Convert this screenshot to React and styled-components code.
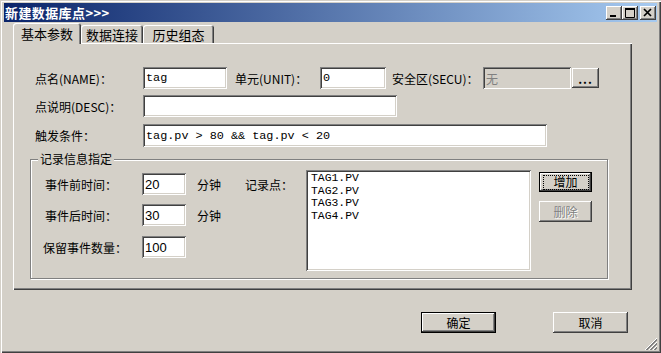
import React from 'react';
import styled, { createGlobalStyle } from 'styled-components';

const GlobalStyle = createGlobalStyle`
  html, body { margin: 0; padding: 0; background: #d4d0c8; }
  body {
    font-family: "Noto Sans CJK SC", "Liberation Sans", sans-serif;
    font-size: 12px;
    color: #000;
  }
  * { box-sizing: border-box; }
`;

const raised = `
  box-shadow: inset -1px -1px #404040, inset 1px 1px #fff,
    inset -2px -2px #808080, inset 2px 2px #d4d0c8;
`;

const sunken = `
  box-shadow: inset 1px 1px #808080, inset -1px -1px #fff,
    inset 2px 2px #404040, inset -2px -2px #d4d0c8;
`;

const Window = styled.div`
  position: relative;
  width: 661px;
  height: 353px;
  background: #d4d0c8;
  padding: 3px 4px;
  display: flex;
  flex-direction: column;
  box-shadow: inset 1px 1px #d4d0c8, inset 2px 2px #fff,
    inset -1px -1px #404040, inset -2px -2px #808080;
`;

const TitleBar = styled.div`
  height: 19px;
  display: flex;
  align-items: center;
  padding-left: 1px;
  background: linear-gradient(to right, #0a246a, #a6caf0);
  color: #fff;
  font-weight: bold;
  font-size: 13px;
  letter-spacing: 0.4px;
`;

const CaptionButtons = styled.div`
  margin-left: auto;
  margin-right: 1px;
  display: flex;
`;

const CapButton = styled.div`
  width: 16px;
  height: 14px;
  margin-left: ${p => p.$gap || 0}px;
  background: #d4d0c8;
  display: flex;
  ${raised}
`;

const Body = styled.div`
  padding: 1px 25px 0 9px;
  display: flex;
  flex-direction: column;
`;

const TabStrip = styled.div`
  display: flex;
  align-items: flex-end;
  height: 20px;
`;

const Tab = styled.div`
  position: relative;
  z-index: ${p => (p.$active ? 1 : 0)};
  width: ${p => p.$w}px;
  height: ${p => (p.$active ? 21 : 18)}px;
  margin-bottom: ${p => (p.$active ? -1 : 0)}px;
  background: #d4d0c8;
  border-radius: 3px 3px 0 0;
  display: flex;
  align-items: center;
  justify-content: center;
  font-size: 13px;
  padding-top: ${p => (p.$active ? 0 : 1)}px;
  box-shadow: inset 1px 1px #fff, inset -1px 0 #404040, inset -2px 0 #808080;
`;

const Panel = styled.div`
  height: 247px;
  padding-top: 24px;
  box-shadow: inset 1px 1px #fff, inset -1px -1px #404040,
    inset -2px -2px #808080;
`;

const FormRow = styled.div`
  display: flex;
  align-items: center;
  height: ${p => p.$h || 22}px;
  padding-left: 22px;
  margin-top: ${p => p.$mt || 0}px;
`;

const Label = styled.div`
  width: ${p => p.$w}px;
  margin-left: ${p => p.$ml || 0}px;
  flex-shrink: 0;
  white-space: nowrap;
`;

const Field = styled.div`
  width: ${p => p.$w}px;
  height: 100%;
  flex-shrink: 0;
  display: flex;
  align-items: center;
  padding: 0 3px;
  background: ${p => (p.$disabled ? '#d4d0c8' : '#fff')};
  color: ${p => (p.$disabled ? '#808080' : '#000')};
  font-family: ${p =>
    p.$sans
      ? '"Liberation Sans", sans-serif'
      : p.$disabled
      ? '"Noto Sans CJK SC", sans-serif'
      : '"Liberation Mono", monospace'};
  font-size: ${p => (p.$sans ? 13 : p.$disabled ? 12 : 11.8)}px;
  white-space: pre;
  ${sunken}
`;

const Button = styled.div`
  width: ${p => p.$w}px;
  height: ${p => p.$h || 21}px;
  margin-left: ${p => p.$ml || 0}px;
  margin-top: ${p => p.$mt || 0}px;
  flex-shrink: 0;
  display: flex;
  align-items: center;
  justify-content: center;
  background: #d4d0c8;
  color: ${p => (p.$disabled ? '#808080' : '#000')};
  text-shadow: ${p => (p.$disabled ? '1px 1px #fff' : 'none')};
  ${p =>
    p.$default
      ? `box-shadow: inset 0 0 0 1px #000, inset -2px -2px #404040,
          inset 2px 2px #fff, inset -3px -3px #808080;`
      : raised}
`;

const Dots = styled.span`
  font-weight: bold;
  letter-spacing: 1px;
  line-height: 1;
  margin-top: 2px;
`;

const FocusRing = styled.span`
  display: flex;
  align-items: center;
  justify-content: center;
  width: calc(100% - 7px);
  height: calc(100% - 5px);
  line-height: 1;
  border: 1px dotted #000;
`;

const Group = styled.div`
  position: relative;
  width: 578px;
  height: 120px;
  margin: 12px 0 0 17px;
  border: 1px solid #808080;
  box-shadow: inset 1px 1px #fff, 1px 1px #fff;
  display: flex;
  padding-top: 10px;
`;

const GroupCaption = styled.div`
  position: absolute;
  top: -9px;
  left: 7px;
  padding: 0 2px;
  background: #d4d0c8;
  line-height: 16px;
`;

const FieldsColumn = styled.div`
  width: 275px;
  padding-top: 3px;
  display: flex;
  flex-direction: column;
`;

const SmallRow = styled.div`
  display: flex;
  align-items: center;
  height: 22px;
  margin-top: ${p => p.$mt || 0}px;
  padding-left: ${p => p.$pl}px;
`;

const Unit = styled.div`
  width: 59px;
  padding-left: 11px;
  flex-shrink: 0;
`;

const ListBox = styled.div`
  width: 225px;
  height: 101px;
  background: #fff;
  padding: 2px 5px;
  font-family: "Liberation Mono", monospace;
  font-size: 11.4px;
  line-height: 12.5px;
  ${sunken}
`;

const ButtonColumn = styled.div`
  margin-left: 8px;
  padding-top: 2px;
  display: flex;
  flex-direction: column;
`;

const Footer = styled.div`
  display: flex;
  justify-content: flex-end;
  gap: 57px;
  margin-top: 22px;
  padding-right: 4px;
`;

const Grip = styled.svg`
  position: absolute;
  right: 4px;
  bottom: 3px;
`;

const records = ['TAG1.PV', 'TAG2.PV', 'TAG3.PV', 'TAG4.PV'];

export default function App() {
  return (
    <>
      <GlobalStyle />
      <Window>
        <TitleBar>
          新建数据库点&gt;&gt;&gt;
          <CaptionButtons>
            <CapButton>
              <svg width="16" height="14">
                <rect x="4" y="9" width="6" height="2" fill="#000" />
              </svg>
            </CapButton>
            <CapButton>
              <svg width="16" height="14">
                <path d="M3.5 3.5h9v8h-9z" fill="none" stroke="#000" />
                <rect x="3" y="2" width="10" height="2" fill="#000" />
              </svg>
            </CapButton>
            <CapButton $gap={2}>
              <svg width="16" height="14">
                <path d="M4 3l7 7M11 3l-7 7" stroke="#000" strokeWidth="1.7" />
              </svg>
            </CapButton>
          </CaptionButtons>
        </TitleBar>

        <Body>
          <TabStrip>
            <Tab $active $w={68}>基本参数</Tab>
            <Tab $w={62}>数据连接</Tab>
            <Tab $w={71}>历史组态</Tab>
          </TabStrip>

          <Panel>
            <FormRow>
              <Label $w={108}>点名(NAME)：</Label>
              <Field $w={84}>tag</Field>
              <Label $w={85} $ml={8}>单元(UNIT)：</Label>
              <Field $w={66}>0</Field>
              <Label $w={91} $ml={6}>安全区(SECU)：</Label>
              <Field $w={88} $disabled>无</Field>
              <Button $w={27} $h={20} $ml={1}>
                <Dots>...</Dots>
              </Button>
            </FormRow>
            <FormRow $mt={6}>
              <Label $w={108}>点说明(DESC)：</Label>
              <Field $w={254} />
            </FormRow>
            <FormRow $mt={7} $h={23}>
              <Label $w={108}>触发条件：</Label>
              <Field $w={404}>tag.pv &gt; 80 &amp;&amp; tag.pv &lt; 20</Field>
            </FormRow>

            <Group>
              <GroupCaption>记录信息指定</GroupCaption>
              <FieldsColumn>
                <SmallRow $pl={14}>
                  <Label $w={97}>事件前时间：</Label>
                  <Field $w={44} $sans>20</Field>
                  <Unit>分钟</Unit>
                  <Label $w={60}>记录点：</Label>
                </SmallRow>
                <SmallRow $pl={14} $mt={9}>
                  <Label $w={97}>事件后时间：</Label>
                  <Field $w={44} $sans>30</Field>
                  <Unit>分钟</Unit>
                </SmallRow>
                <SmallRow $pl={12} $mt={10}>
                  <Label $w={99}>保留事件数量：</Label>
                  <Field $w={44} $sans>100</Field>
                </SmallRow>
              </FieldsColumn>
              <ListBox>
                {records.map(r => (
                  <div key={r}>{r}</div>
                ))}
              </ListBox>
              <ButtonColumn>
                <Button $w={53} $h={20} $default>
                  <FocusRing>增加</FocusRing>
                </Button>
                <Button $w={53} $mt={9} $disabled>删除</Button>
              </ButtonColumn>
            </Group>
          </Panel>

          <Footer>
            <Button $w={75} $default>确定</Button>
            <Button $w={75}>取消</Button>
          </Footer>
        </Body>

        <Grip width="12" height="12">
          {[0, 4, 8].map(o => (
            <g key={o}>
              <line x1={12} y1={o} x2={o} y2={12} stroke="#fff" />
              <line x1={12} y1={o + 1} x2={o + 1} y2={12} stroke="#808080" />
              <line x1={12} y1={o + 2} x2={o + 2} y2={12} stroke="#808080" />
            </g>
          ))}
        </Grip>
      </Window>
    </>
  );
}
